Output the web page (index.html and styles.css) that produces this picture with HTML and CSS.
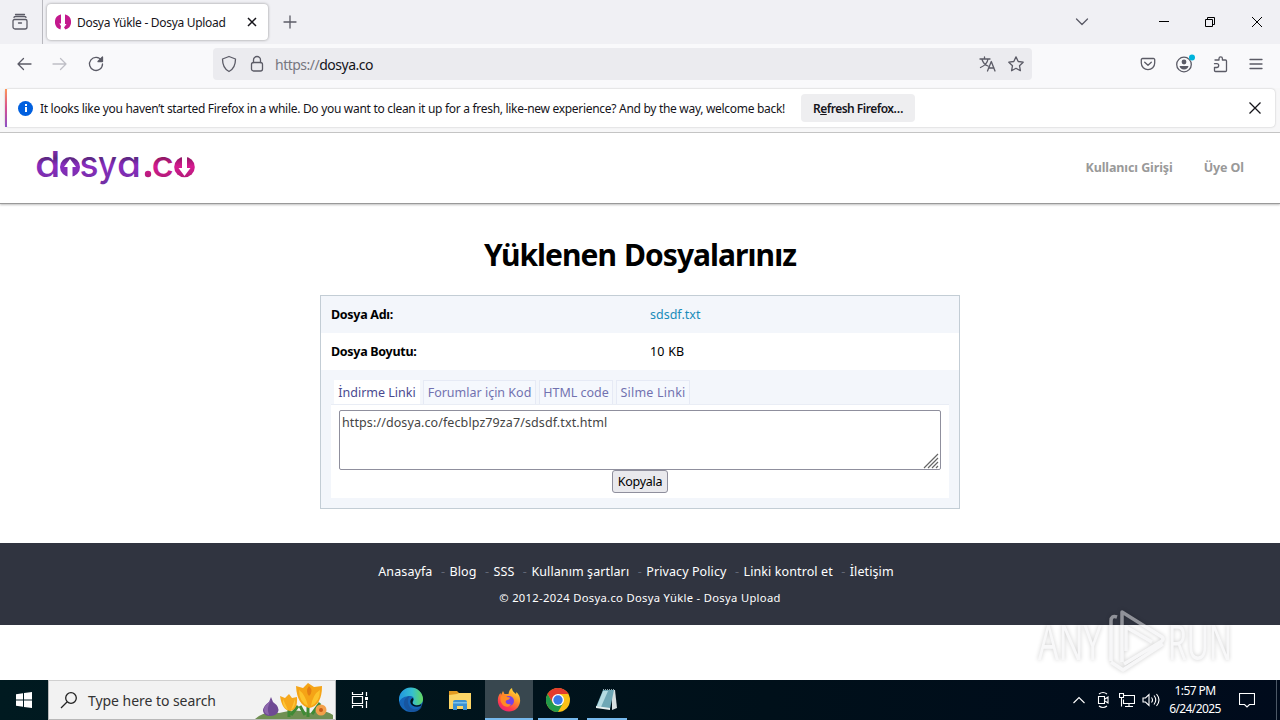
FILE: index.html
```html
<!DOCTYPE html>
<html lang="tr">
<head>
  <meta charset="UTF-8">
  <title>Dosya Yükle - Dosya Upload</title>
  <link rel="stylesheet" href="styles.css">
</head>
<body>

<div class="tabbar">
  <div class="firefox-view">
    <svg width="18" height="18" viewBox="0 0 18 18" class="icon"><path d="M4.500 1.500h9M3 4.500q0-1 1.500-1h9q1.500 0 1.500 1M3.500 6.500h11a1.500 1.500 0 0 1 1.500 1.500v6a2 2 0 0 1-2 2H4a2 2 0 0 1-2-2V8a1.500 1.500 0 0 1 1.500-1.500M7.500 10h3"/></svg>
  </div>
  <div class="tab">
    <svg width="16" height="16" viewBox="0 0 16 16"><path fill="#c3198d" d="M5.500.6A7.700 7.700 0 0 0 5.500 15.400L6 12 4.300 9.500H6V.6zM10.500.6A7.700 7.700 0 0 1 10.500 15.400L9 13.500 11.500 10H10V.6z"/></svg>
    <span class="tab-title">Dosya Yükle - Dosya Upload</span>
    <svg width="10" height="10" viewBox="0 0 10 10"><path stroke="#15141a" stroke-width="1.500" d="M1 1l8 8M9 1L1 9"/></svg>
  </div>
  <svg class="icon new-tab" width="14" height="14" viewBox="0 0 14 14"><path d="M7 1v12M1 7h12"/></svg>
  <div class="window-buttons">
    <svg class="icon" width="14" height="10" viewBox="0 0 14 10"><path d="M1.500 2L7 7.500 12.500 2"/></svg>
    <svg width="10" height="10" viewBox="0 0 10 10"><path stroke="#000" d="M0 4.500h10"/></svg>
    <svg width="10" height="10" viewBox="0 0 10 10"><path fill="none" stroke="#000" d="M.5 2.500h7v7h-7zM2.500 2.500v-2h7v7h-2"/></svg>
    <svg width="12" height="12" viewBox="0 0 12 12"><path stroke="#000" d="M1 1l10 10M11 1L1 11"/></svg>
  </div>
</div>

<div class="toolbar">
  <div class="nav-buttons">
    <svg class="icon" width="16" height="16" viewBox="0 0 16 16"><path d="M15 8H2M7.500 2.500L2 8l5.500 5.500"/></svg>
    <svg class="icon disabled" width="16" height="16" viewBox="0 0 16 16"><path d="M1 8h13M8.500 2.500L14 8l-5.500 5.500"/></svg>
    <svg class="icon" width="16" height="16" viewBox="0 0 16 16"><path d="M13.500 4.500A6.500 6.500 0 1 0 14.500 8"/><path fill="#5b5b66" d="M10 5.500h4.500V1z"/></svg>
  </div>
  <div class="urlbar">
    <svg class="icon" width="16" height="18" viewBox="0 0 16 18"><path d="M8 1.500l6.500 2.500c0 6-1.500 10-6.500 12.500C3 14 1.500 10 1.500 4z"/></svg>
    <svg class="icon" width="14" height="18" viewBox="0 0 14 18"><rect x="1.500" y="7.500" width="11" height="8.500" rx="2"/><path d="M3.500 7.500V5a3.500 3.500 0 0 1 7 0v2.500"/></svg>
    <span class="url"><i>https://</i>dosya.co</span>
    <svg class="icon translate" width="18" height="16" viewBox="0 0 18 16"><path d="M1 3h10M5.500 1v2M9 3C8.500 6.500 5 10 1.500 11.500M3 3.500c1 3 3 5.500 6 6.500M8.500 15l3.800-9.500L16 15M9.500 12h5.500"/></svg>
    <svg class="icon" width="16" height="16" viewBox="0 0 16 16"><path d="M8 .9l2.200 4.600 5 .7-3.700 3.500.9 5L8 12.300l-4.400 2.400.9-5L.8 6.200l5-.7z"/></svg>
  </div>
  <div class="tools">
    <svg class="icon" width="16" height="16" viewBox="0 0 16 16"><path d="M2.500 2.500h11a1.200 1.200 0 0 1 1.200 1.200V7a6.700 6.700 0 0 1-13.400 0V3.700a1.200 1.200 0 0 1 1.200-1.200zM4.700 6.200L8 9.300l3.300-3.100"/></svg>
    <svg width="22" height="20" viewBox="0 0 22 20"><circle cx="10" cy="10.500" r="7.300" fill="none" stroke="#5b5b66" stroke-width="1.300"/><circle cx="10" cy="8" r="2.400" fill="#5b5b66"/><path fill="#5b5b66" d="M5.500 12h9c-.5 2-2 3.500-4.500 3.500s-4-1.500-4.500-3.500z"/><circle cx="18" cy="3.500" r="3" fill="#00b3dc"/></svg>
    <svg class="icon" width="16" height="18" viewBox="0 0 16 18"><path d="M2 5h4V3.500a1.700 1.700 0 0 1 3.400 0V5h3.100a1 1 0 0 1 1 1v9.500a1 1 0 0 1-1 1H2.500a1 1 0 0 1-1-1v-3h2.300a1.900 1.900 0 0 0 0-3.800H1.500"/></svg>
    <svg class="icon" width="14" height="12" viewBox="0 0 14 12"><path d="M1 1.500h12M1 6h12M1 10.500h12"/></svg>
  </div>
</div>

<div class="notification">
  <div class="message">
    <span class="info"></span>
    <span class="message-text">It looks like you haven’t started Firefox in a while. Do you want to clean it up for a fresh, like-new experience? And by the way, welcome back!</span>
    <button class="refresh">R<u>e</u>fresh Firefox…</button>
    <svg class="dismiss" width="14" height="14" viewBox="0 0 14 14"><path stroke="#15141a" stroke-width="1.300" d="M1.500 1.500l11 11M12.500 1.500l-11 11"/></svg>
  </div>
</div>

<div class="page">
  <header class="site-header">
    <svg class="logo" width="170" height="64" viewBox="-4 -13 170 64">
      <defs>
        <linearGradient id="purple" x1="0" y1="0" x2="0" y2="38" gradientUnits="userSpaceOnUse">
          <stop offset="0" stop-color="#8e2fc0"/><stop offset=".27" stop-color="#5c2783"/><stop offset=".45" stop-color="#8a2cc0"/><stop offset="1" stop-color="#6f2fa0"/>
        </linearGradient>
        <linearGradient id="pink" x1="0" y1="9" x2="0" y2="30" gradientUnits="userSpaceOnUse">
          <stop offset="0" stop-color="#8c1762"/><stop offset=".45" stop-color="#d81b92"/><stop offset="1" stop-color="#b01b78"/>
        </linearGradient>
      </defs>
      <g fill="url(#purple)">
        <text x="-1" y="28.500" textLength="25.500" lengthAdjust="spacingAndGlyphs">d</text>
        <circle cx="34" cy="19" r="10"/>
        <text x="43.500" y="28.500" textLength="19" lengthAdjust="spacingAndGlyphs">s</text>
        <text x="62" y="28.500" textLength="19" lengthAdjust="spacingAndGlyphs">y</text>
        <text x="81" y="28.500" textLength="24" lengthAdjust="spacingAndGlyphs">a</text>
      </g>
      <path fill="#fff" d="M34 11l6 8h-3.500v11h-5V19H28z"/>
      <g fill="url(#pink)">
        <circle cx="112" cy="26" r="3.200"/>
        <text x="115.500" y="28.500" textLength="22.500" lengthAdjust="spacingAndGlyphs">c</text>
        <circle cx="148.500" cy="19" r="10.300"/>
      </g>
      <path fill="#fff" d="M148.500 28l-6-8h3.500V8h5v12h3.500z"/>
    </svg>
    <nav class="user-links">
      <a href="#">Kullanıcı Girişi</a>
      <a href="#">Üye Ol</a>
    </nav>
  </header>

  <main>
    <h1>Yüklenen Dosyalarınız</h1>
    <div class="result">
      <div class="row">
        <b>Dosya Adı:</b>
        <a href="#">sdsdf.txt</a>
      </div>
      <div class="row white">
        <b>Dosya Boyutu:</b>
        <span>10 KB</span>
      </div>
      <div class="links">
        <div class="tabs">
          <a class="t1 active" href="#">İndirme Linki</a>
          <a class="t2" href="#">Forumlar için Kod</a>
          <a class="t3" href="#">HTML code</a>
          <a class="t4" href="#">Silme Linki</a>
        </div>
        <div class="tab-body">
          <div class="code-box">
            <span>https://dosya.co/fecblpz79za7/sdsdf.txt.html</span>
            <svg width="16" height="16" viewBox="0 0 16 16"><path stroke="#666" stroke-width="1.200" d="M1 15L15 1M5 15L15 5M9 15l6-6M13 15l2-2"/></svg>
          </div>
          <button class="copy">Kopyala</button>
        </div>
      </div>
    </div>
  </main>

  <footer>
    <div class="footer-links">
      <a href="#">Anasayfa</a><i>-</i><a href="#">Blog</a><i>-</i><a href="#">SSS</a><i>-</i><a href="#">Kullanım şartları</a><i>-</i><a href="#">Privacy Policy</a><i>-</i><a href="#">Linki kontrol et</a><i>-</i><a href="#">İletişim</a>
    </div>
    <p>© 2012-2024 Dosya.co Dosya Yükle - Dosya Upload</p>
  </footer>
</div>

<svg class="watermark" width="216" height="76" viewBox="0 0 216 76">
  <g class="wm-text">
    <text x="2" y="56" textLength="64" lengthAdjust="spacingAndGlyphs">ANY</text>
    <text x="132" y="56" textLength="64" lengthAdjust="spacingAndGlyphs">RUN</text>
  </g>
  <path class="wm-line" d="M81 13q-6-2-6 4v40M86 58V8l40 25q2 2 0 4L88 60M90 21v26M90 23l26 15M75 58l12 8 40-26"/>
</svg>

<div class="taskbar">
  <div class="start">
    <svg width="16" height="16" viewBox="0 0 16 16"><path fill="#fff" d="M0 2.200L7 1.200V7.500H0zM8 1.100L16 0v7.500H8zM0 8.500h7v6.300l-7-1zM8 8.500h8V16l-8-1.100z"/></svg>
  </div>
  <div class="search">
    <svg width="18" height="18" viewBox="0 0 18 18"><path fill="none" stroke="#222" stroke-width="1.300" d="M1 17l6-6"/><circle cx="11" cy="7" r="5.300" fill="none" stroke="#222" stroke-width="1.300"/></svg>
    <span>Type here to search</span>
    <svg class="flowers" width="80" height="38" viewBox="0 0 80 38">
      <path fill="#6f8f52" d="M0 38Q10 29 24 32Q42 27 55 32Q68 27 78 34V38z"/>
      <path fill="none" stroke="#3f8a35" stroke-width="3" d="M34 36V25M36 34l7-9M53 36V22M50 34l-5-9M57 33l8-11"/>
      <path fill="#6f4a94" d="M16 16l2 5q7 5 5 10-2 4-8 4t-7-5q0-5 6-9z"/>
      <path fill="#8d67ad" d="M16 19q-5 8-2 15-5-1-5-6 1-4 7-9z"/>
      <path fill="#f6a81c" d="M25 15l5 2 4-4 3 4 5-1q1 13-7 14-8-1-10-15z"/>
      <path fill="#fdc436" d="M28 18l5 11q-6-3-5-11zM40 18l-4 11q5-3 4-11z"/>
      <path fill="#f5a416" d="M41 5l7 2 5-5 6 4 8-1q0 20-13 22Q42 24 41 5z"/>
      <path fill="#fdc42c" d="M44 9q6 4 9 16-9-4-9-16zM65 9q-7 4-9 16 9-4 9-16z"/>
      <path fill="#e57f12" d="M54 5q-4 5 0 10 5-5 0-10z"/>
      <circle cx="66" cy="29" r="5.500" fill="#f3a04a"/><circle cx="66" cy="29" r="2" fill="#c75a16"/>
    </svg>
  </div>
  <div class="apps">
    <div class="app task-view">
      <svg width="18" height="18" viewBox="0 0 18 18"><path fill="none" stroke="#fff" stroke-width="1.200" d="M1.500 1v2.500h10V1M1.500 5.500h10v7h-10zM1.500 17v-2.500h10V17M15.500 1v4M15.500 10v7"/><path fill="#fff" d="M14 6h3v3h-3z"/></svg>
    </div>
    <div class="app edge">
      <svg width="26" height="26" viewBox="0 0 26 26">
        <defs><linearGradient id="eg" x1="0" x2="1"><stop offset="0" stop-color="#2196df"/><stop offset=".55" stop-color="#35bfd0"/><stop offset="1" stop-color="#64d85c"/></linearGradient></defs>
        <circle cx="13" cy="13" r="12" fill="#1565b8"/>
        <path fill="url(#eg)" d="M1 13A12 12 0 0 1 25 12c0 4-3 6-6 6s-5-1-4-3c2-4 0-6-3-6-5 0-9 2-11 6z"/>
        <path fill="#17559f" d="M12 9c-3 2-3 11 3 13 4 1 7-1 9-3-3 7-11 7-15 4-5-4-4-13 3-14z"/>
        <path fill="#001418" d="M14.500 11c2 1 0 3 0 5 1 3 6 3 9 1l-1 2c-4 2-9 0-10-3-.5-2 0-4 2-5z"/>
      </svg>
    </div>
    <div class="app explorer">
      <svg width="22" height="20" viewBox="0 0 22 20"><path fill="#e39b21" d="M0 1h8l2 2h12v4H0z"/><path fill="#fcd566" d="M0 5l8-1 2-1h12v16H0z"/><path fill="#3b91d2" d="M4 12q0-2 2-2h10q2 0 2 2v8h-4v-4H8v4H4z"/><path fill="#79c1ec" d="M4 12h14v1.500H4z"/></svg>
    </div>
    <div class="app running current">
      <svg width="24" height="24" viewBox="0 0 24 24">
        <defs><linearGradient id="fx" x1=".8" y1="0" x2=".2" y2="1"><stop offset="0" stop-color="#ffe43a"/><stop offset=".4" stop-color="#ff9327"/><stop offset=".75" stop-color="#ff3b4c"/><stop offset="1" stop-color="#e5207e"/></linearGradient></defs>
        <path fill="url(#fx)" d="M12 23.500C5 23.500.8 18 .8 12.500.8 9 2 6.500 3.500 5l.5 2 2-4 1.500 3h4C12 3 13 1 15 0c0 3 2 4 4 6l.5-2c3 3 4 6 3.500 10-.8 5.500-5 9.500-11 9.500z"/>
        <circle cx="12" cy="13" r="5" fill="#7542e5"/>
        <path fill="#ff8b24" d="M4 8q4-2 6 1l3 .5q0 2-3 2.500-2 1-1 3 2 2 5 1-2 4-7 2-5-4-3-10z"/>
      </svg>
    </div>
    <div class="app running">
      <svg width="24" height="24" viewBox="0 0 24 24"><circle cx="12" cy="12" r="12" fill="#fbc116"/><path fill="#e33b2e" d="M12 6h10.400A12 12 0 0 0 1.600 6L6.800 15z"/><path fill="#229a4b" d="M1.600 6A12 12 0 0 0 12 24l5.200-9L12 17.500 6.800 15z"/><circle cx="12" cy="12" r="6" fill="#fff"/><circle cx="12" cy="12" r="4.700" fill="#3879e8"/></svg>
    </div>
    <div class="app running">
      <svg width="24" height="24" viewBox="0 0 24 24"><path fill="#d7e0e1" d="M17 2l3 0 2 18-5 2z"/><path fill="#6fa7b5" d="M8 2h11l-4 19-14-2z"/><path fill="#b5dbe2" d="M8 3h5L6 19l-4-1z"/><path fill="#e5eeee" d="M1 18l14 2v2L1 20z"/><path stroke="#8fa5ad" stroke-dasharray="1 1" d="M8 1.500h12"/></svg>
    </div>
  </div>
  <div class="tray">
    <svg class="tray-icon" width="12" height="8" viewBox="0 0 12 8"><path d="M.5 7L6 1.500 11.500 7"/></svg>
    <svg class="tray-icon camera" width="12" height="18" viewBox="0 0 12 18"><path d="M2 3q4-3 8 0M2 15q4 3 8 0M1.500 5.500h6v7h-6zM8 8l3-2v6l-3-2"/></svg>
    <svg class="tray-icon network" width="16" height="16" viewBox="0 0 16 16"><path d="M5 3.500h10.500v8H4.500v-4M10 11.500v3M6 14.500h8M.5 1.500h4v4h-4zM2.500 5.500v9"/></svg>
    <svg class="tray-icon sound" width="18" height="14" viewBox="0 0 18 14"><path d="M1 5h2.500L7 1.500v11L3.500 9H1zM9.500 4.500q2 2.500 0 5M12 2.500q3.500 4.500 0 9M14.500 1q5 6 0 12"/></svg>
    <div class="clock"><span>1:57 PM</span><span>6/24/2025</span></div>
    <svg class="tray-icon" width="16" height="16" viewBox="0 0 16 16"><path d="M.5 1.500h15v11h-5L8 15l-2.500-2.500h-5z"/></svg>
    <div class="show-desktop"></div>
  </div>
</div>

</body>
</html>
```
FILE: styles.css
```css
* { box-sizing: border-box; }
body { margin: 0; height: 720px; overflow: hidden; display: flex; flex-direction: column; position: relative; background: #fff; font-family: "Noto Sans", sans-serif; }
a { text-decoration: none; }
svg { display: block; flex: none; }
.icon { fill: none; stroke: #5b5b66; stroke-width: 1.3; stroke-linecap: round; stroke-linejoin: round; }
.disabled { stroke: #bfbfc6; }

/* browser */
.tabbar { height: 44px; flex: none; display: flex; background: #f0f0f4; }
.firefox-view { width: 43px; border-right: 1px solid #b8b8be; padding: 13px 0 0 11px; }
.tab { width: 221px; height: 36px; margin: 4px 0 0 4px; padding: 0 11px 0 8px; background: #fff; border-radius: 4px; box-shadow: 0 0 3px rgba(0,0,0,0.4); display: flex; align-items: center; }
.tab-title { flex: 1; margin-left: 6px; font-size: 12px; letter-spacing: -0.3px; color: #15141a; white-space: nowrap; }
.new-tab { margin: 15px 0 0 15px; }
.window-buttons { margin-left: auto; padding-right: 17px; display: flex; align-items: center; }
.window-buttons svg + svg { margin-left: 36px; }
.window-buttons svg:nth-child(2) { margin-left: 70px; }

.toolbar { height: 44px; flex: none; display: flex; align-items: center; background: #f9f9fb; padding-bottom: 4px; }
.nav-buttons { width: 213px; padding-left: 16px; display: flex; gap: 20px; }
.urlbar { width: 819px; height: 32px; padding: 0 8px; border-radius: 4px; background: #ebebef; display: flex; align-items: center; }
.urlbar svg + svg { margin-left: 13px; }
.url { margin-left: 11px; padding-top: 1px; font-size: 14px; letter-spacing: -0.5px; color: #15141a; }
.url i { font-style: normal; color: #77777f; }
.translate { margin-left: auto; }
.urlbar .translate + svg { margin-left: 11px; }
.tools { margin-left: auto; padding-right: 17px; display: flex; align-items: center; }
.tools svg + svg { margin-left: 18px; }
.tools svg:nth-child(3) { margin-left: 17px; }
.tools svg:nth-child(4) { margin-left: 20px; }

.notification { height: 45px; flex: none; background: #f7f7f8; border-bottom: 1px solid #c8c8c8; padding: 1px 5px 5px 5px; }
.message { height: 38px; display: flex; align-items: center; background: #fff; border-radius: 4px; border-left: 2px solid #c257a0; border-image: linear-gradient(#ff9a55, #d64f92, #8750c8) 1; box-shadow: 0 0 2px rgba(0,0,0,0.25); padding: 0 13px 0 11px; }
.info { width: 15px; height: 15px; flex: none; border-radius: 50%; background: #0060df; display: flex; flex-direction: column; align-items: center; padding-top: 3px; gap: 1px; }
.info::before { content: ""; width: 2px; height: 2px; background: #fff; }
.info::after { content: ""; width: 2px; height: 5px; background: #fff; }
.message-text { margin-left: 7px; width: 746px; font-size: 12px; letter-spacing: -0.3px; color: #15141a; white-space: nowrap; }
.refresh { width: 114px; height: 28px; margin-left: 15px; padding: 0; border: none; border-radius: 4px; background: #eeeef0; color: #15141a; font: 600 12px "Noto Sans", sans-serif; letter-spacing: -0.5px; }
.dismiss { margin-left: auto; }

/* site */
.page { flex: 1; color: #000; }
.site-header { height: 71px; padding: 0 36px 2px 32px; display: flex; justify-content: space-between; align-items: center; border-bottom: 1px solid #999; box-shadow: 0 1px 2px rgba(0,0,0,0.25); }
.logo { margin-bottom: 1px; }
.logo text { font: 500 36px Inter, sans-serif; font-feature-settings: "cv11"; }
.user-links { display: flex; gap: 31px; font-size: 12.5px; font-weight: bold; letter-spacing: -0.1px; }
.user-links a { color: #999; }
h1 { margin: 29px 0 18px; font-size: 30px; line-height: 44px; letter-spacing: -0.95px; word-spacing: 1px; text-align: center; }
.result { width: 640px; height: 214px; margin: 0 auto; border: 1px solid #c3cdd5; background: #f3f6fb; font-size: 12.5px; }
.row { height: 37px; padding: 0 10px; display: grid; grid-template-columns: 319px 1fr; align-items: center; }
.row a { color: #1a8cba; }
.row b { letter-spacing: -0.3px; }
.row span { letter-spacing: 0.2px; }
.white { background: #fff; }
.links { padding: 10px; }
.tabs { display: flex; gap: 3px; padding-left: 3px; }
.tabs a { height: 24px; line-height: 23px; text-align: center; white-space: nowrap; color: #7272b0; border: 1px solid #e6eaf5; border-bottom: none; background: #f5f8fd; }
.tabs .active { color: #4a4a90; background: #fff; border-color: #fff; }
.t1 { width: 86px; }
.t2 { width: 113px; }
.t3 { width: 74px; }
.t4 { width: 74px; letter-spacing: 0.2px; }
.tab-body { height: 94px; padding: 5px 8px 0; background: #fff; border-top: 1px solid #e9edf5; display: flex; flex-direction: column; align-items: center; }
.code-box { width: 602px; height: 60px; border: 1px solid #8f8f9d; border-radius: 2px; padding: 2px; color: #444; line-height: 19px; letter-spacing: 0.1px; display: flex; justify-content: space-between; }
.code-box svg { align-self: flex-end; margin: 0 -1px -2px 0; }
.copy { width: 56px; height: 23px; padding: 0; border: 1px solid #8f8f9d; border-radius: 3px; background: #e9e9ed; color: #000; font: 12.5px "Noto Sans", sans-serif; letter-spacing: -0.3px; }
footer { height: 82px; margin-top: 34px; padding-top: 18px; background: #303440; color: #fff; text-align: center; }
.footer-links { display: flex; justify-content: center; padding-right: 8px; font-size: 12.5px; line-height: 21px; letter-spacing: 0.1px; }
.footer-links a { color: #fff; }
.footer-links i { width: 17px; padding-left: 4px; font-style: normal; color: #626775; }
footer p { margin: 6px 0 0; font-size: 11.2px; line-height: 20px; letter-spacing: 0.33px; }

.watermark { position: absolute; left: 1036px; top: 604px; opacity: 0.5; filter: drop-shadow(0 0 2px rgba(0,0,0,0.4)); }
.wm-text { font: 400 50px "Open Sans", sans-serif; fill: #f2f2f4; }
.wm-line { fill: none; stroke: #f0f0f2; stroke-width: 3.5; stroke-linejoin: round; }

/* taskbar */
.taskbar { height: 40px; flex: none; display: flex; background: linear-gradient(90deg, #001a20, #00101a 60%, #000b1c); }
.start { width: 48px; display: flex; align-items: center; justify-content: center; }
.search { width: 288px; background: #f2f2f2; border: 1px solid #b8b8b8; border-top-color: #d0d0d0; display: flex; align-items: center; padding-left: 11px; }
.search span { margin-left: 10px; font-size: 14px; letter-spacing: -0.05px; color: #333; white-space: nowrap; }
.flowers { margin-left: auto; }
.apps { display: flex; }
.app { width: 49px; height: 40px; display: flex; align-items: center; justify-content: center; position: relative; }
.task-view { width: 48px; }
.edge { width: 54px; }
.explorer { width: 47px; padding-right: 3px; }
.current { width: 48px; background: #38474f; }
.running::after { content: ""; position: absolute; left: 5px; right: 4px; bottom: 0; height: 2px; background: #76b9ed; }
.current::after { left: 0; right: 0; }
.tray { margin-left: auto; display: flex; align-items: center; }
.tray-icon { fill: none; stroke: #fff; stroke-width: 1.1; }
.camera { margin-left: 12px; }
.network { margin-left: 10px; }
.sound { margin-left: 7px; }
.clock { width: 56px; margin: 0 16px 0 7px; display: flex; flex-direction: column; align-items: center; color: #fff; font-size: 12px; line-height: 18px; letter-spacing: -0.6px; white-space: nowrap; }
.show-desktop { width: 4px; height: 40px; margin-left: 21px; border-left: 1px solid #4c5866; }
```
